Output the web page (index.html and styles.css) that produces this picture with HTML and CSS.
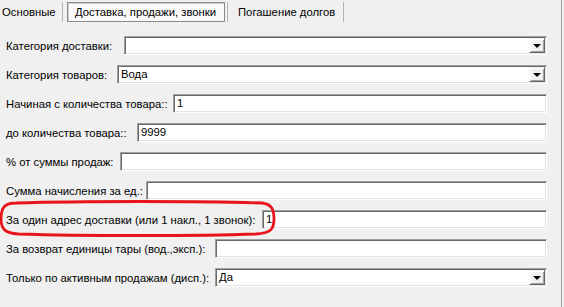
FILE: index.html
```html
<!DOCTYPE html>
<html lang="ru">
<head>
  <meta charset="UTF-8">
  <title>Доставка, продажи, звонки</title>
  <link rel="stylesheet" href="styles.css">
</head>
<body>

  <!-- вкладки -->
  <div class="tabs">
    <span class="tab">Основные</span>
    <span class="sep"></span>
    <span class="tab tab-active">Доставка, продажи, звонки</span>
    <span class="sep"></span>
    <span class="tab">Погашение долгов</span>
    <span class="sep"></span>
  </div>

  <!-- форма -->
  <div class="form">
    <div class="row">
      <label class="lbl w124">Категория доставки:</label>
      <div class="field combo"><span class="val"></span><span class="drop"></span></div>
    </div>
    <div class="row">
      <label class="lbl w117">Категория товаров:</label>
      <div class="field combo"><span class="val">Вода</span><span class="drop"></span></div>
    </div>
    <div class="row">
      <label class="lbl w173">Начиная с количества товара::</label>
      <div class="field"><span class="val">1</span></div>
    </div>
    <div class="row">
      <label class="lbl w137">до количества товара::</label>
      <div class="field"><span class="val">9999</span></div>
    </div>
    <div class="row">
      <label class="lbl w120">% от суммы продаж:</label>
      <div class="field"><span class="val"></span></div>
    </div>
    <div class="row">
      <label class="lbl w146">Сумма начисления за ед.:</label>
      <div class="field"><span class="val"></span></div>
    </div>
    <div class="row row-marked">
      <label class="lbl w262">За один адрес доставки (или 1 накл., 1 звонок):</label>
      <div class="field"><span class="val">1</span></div>
      <!-- красная пометка поверх строки -->
      <svg class="mark" width="280" height="40" viewBox="0 0 280 40">
        <path d="M16 3 C80 1 200 1 262 3 C272 4 274 10 274 19 C274 30 270 33 256 34 C200 36 80 36 18 34 C5 33 1 29 1 19 C1 7 5 3 16 3 Z"
              fill="none" stroke="#e8141c" stroke-width="2.8"/>
      </svg>
    </div>
    <div class="row">
      <label class="lbl w215">За возврат единицы тары (вод.,эксп.):</label>
      <div class="field"><span class="val"></span></div>
    </div>
    <div class="row">
      <label class="lbl w215">Только по активным продажам (дисп.):</label>
      <div class="field combo"><span class="val">Да</span><span class="drop"></span></div>
    </div>
  </div>

</body>
</html>
```

FILE: styles.css
```css
/* ===== общее ===== */
body {
  margin: 0;
  width: 564px;
  height: 307px;
  background: #f0f0f0;
  font-family: "Liberation Sans", Arial, sans-serif;
  font-size: 11.3px;
  color: #000;
  overflow: hidden;
  position: relative;
}
/* правая граница панели */
body::after {
  content: "";
  position: absolute;
  top: 0; bottom: 0;
  left: 561px;
  width: 1px;
  background: #a0a0a0;
}

/* ===== вкладки ===== */
.tabs {
  display: flex;
  align-items: center;
  height: 24px;
}
.tab {
  white-space: nowrap;
  line-height: 20px;
}
.tab:first-child {
  padding-left: 2px;
  width: 50px;
  margin-right: 10px;
}
.tab:nth-child(5) {
  margin-left: 10px;
  width: 95px;
  margin-right: 10px;
}
.sep {
  width: 1px;
  height: 20px;
  background: #b4b4b4;
}
.tab-active {
  box-sizing: border-box;
  width: 158px;
  height: 20px;
  line-height: 18px;
  margin: 0 2px 0 4px;
  padding: 0 7px;
  background: #f9f9f9;
  border: 1px solid #8a8a8a;
  box-shadow: inset 1px 1px 0 #d0d0d0;
}

/* ===== форма ===== */
.form {
  display: flex;
  flex-direction: column;
  gap: 10px;
  padding: 12px 17px 0 6px;
}
.row {
  display: flex;
  align-items: center;
  height: 19px;
  position: relative;
}
.lbl {
  flex: none;
  white-space: nowrap;
}
.w117 { width: 111px; }
.w120 { width: 114px; }
.w124 { width: 118px; }
.w137 { width: 131px; }
.w146 { width: 140px; }
.w173 { width: 167px; }
.w215 { width: 209px; }
.w262 { width: 256px; }

/* поле ввода (утопленная рамка) */
.field {
  flex: 1;
  height: 19px;
  box-sizing: border-box;
  background: #fff;
  border-top: 1px solid #a0a0a0;
  border-left: 1px solid #a0a0a0;
  border-right: 1px solid #fff;
  border-bottom: 1px solid #fff;
  box-shadow: inset 1px 1px 0 #696969, inset -1px -1px 0 #e3e3e3;
  display: flex;
  align-items: center;
  padding: 0 2px 0 3px;
}
.val {
  flex: 1;
  line-height: 15px;
}

/* кнопка выпадающего списка */
.drop {
  flex: none;
  width: 16px;
  height: 15px;
  margin-right: -1px;
  box-sizing: border-box;
  background: #f0f0f0;
  border-top: 1px solid #f0f0f0;
  border-left: 1px solid #f0f0f0;
  border-right: 1px solid #696969;
  border-bottom: 1px solid #696969;
  box-shadow: inset 1px 1px 0 #fff, inset -1px -1px 0 #a0a0a0;
  position: relative;
}
.drop::after {
  content: "";
  position: absolute;
  left: 3px; top: 5px;
  border-left: 4px solid transparent;
  border-right: 4px solid transparent;
  border-top: 4px solid #000;
}

/* красная пометка */
.mark {
  position: absolute;
  left: -6px;
  top: -10px;
}
```
